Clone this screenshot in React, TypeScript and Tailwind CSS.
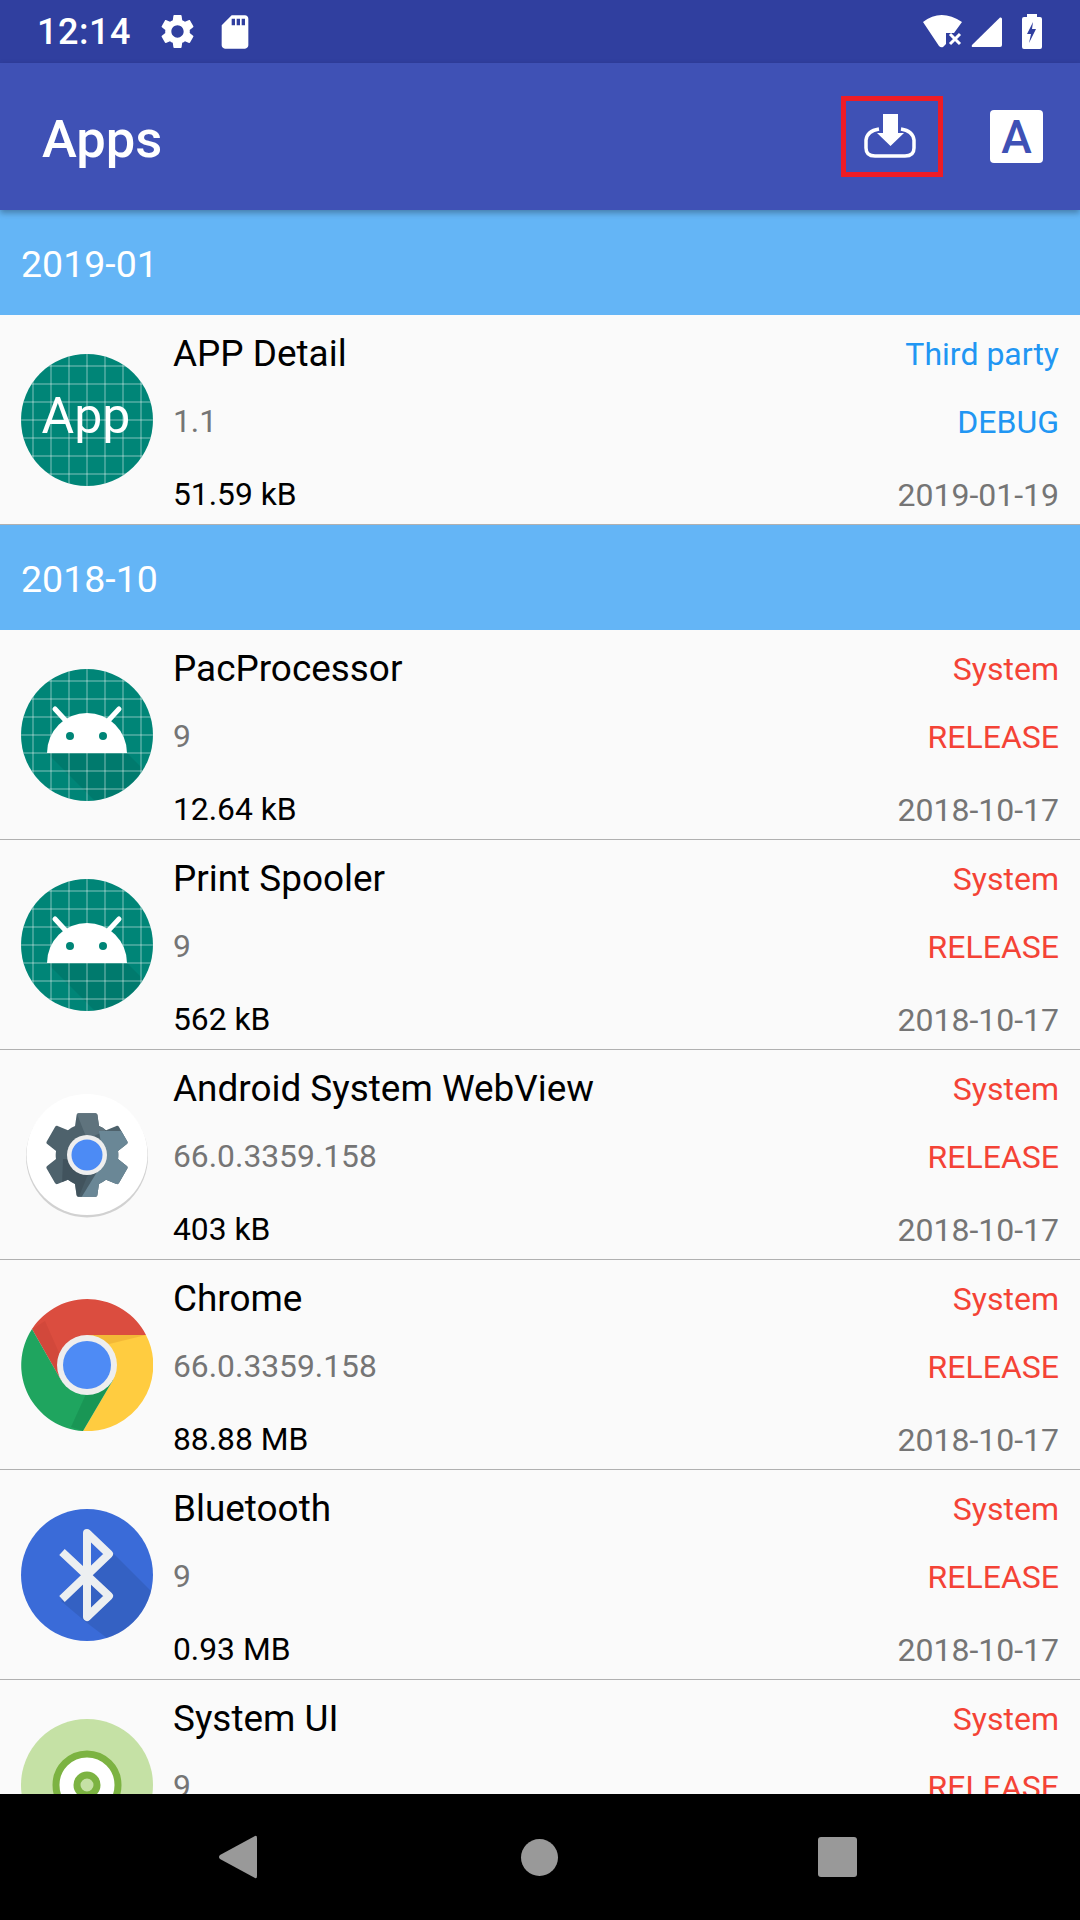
import type { ReactNode } from "react";

const GEAR =
  "M19.14 12.94c.04-.3.06-.61.06-.94 0-.32-.02-.64-.07-.94l2.03-1.58c.18-.14.23-.41.12-.61l-1.92-3.32c-.12-.22-.37-.29-.59-.22l-2.39.96c-.5-.38-1.03-.7-1.62-.94l-.36-2.54c-.04-.24-.24-.41-.48-.41h-3.84c-.24 0-.43.17-.47.41l-.36 2.54c-.59.24-1.13.57-1.62.94l-2.39-.96c-.22-.08-.47 0-.59.22L2.74 8.87c-.12.21-.08.47.12.61l2.03 1.58c-.05.3-.09.63-.09.94s.02.64.07.94l-2.03 1.58c-.18.14-.23.41-.12.61l1.92 3.32c.12.22.37.29.59.22l2.39-.96c.5.38 1.03.7 1.62.94l.36 2.54c.05.24.24.41.48.41h3.84c.24 0 .44-.17.47-.41l.36-2.54c.59-.24 1.13-.56 1.62-.94l2.39.96c.22.08.47 0 .59-.22l1.92-3.32c.12-.22.07-.47-.12-.61l-2.01-1.58zM12 15.6c-1.98 0-3.6-1.62-3.6-3.6s1.62-3.6 3.6-3.6 3.6 1.62 3.6 3.6-1.62 3.6-3.6 3.6z";

function GridLines() {
  return (
    <>
      {[12, 30, 48, 66, 84, 102, 120].map((p) => (
        <g key={p} stroke="#fff" strokeOpacity="0.5" strokeWidth="1">
          <line x1={p} y1="0" x2={p} y2="132" />
          <line x1="0" y1={p} x2="132" y2={p} />
        </g>
      ))}
    </>
  );
}

function AppIcon() {
  return (
    <svg width="132" height="132" viewBox="0 0 132 132">
      <defs>
        <clipPath id="app-clip">
          <circle cx="66" cy="66" r="66" />
        </clipPath>
      </defs>
      <g clipPath="url(#app-clip)">
        <rect width="132" height="132" fill="#008577" />
        <GridLines />
      </g>
      <text x="65" y="79" textAnchor="middle" fill="#fff" fontSize="50" fontFamily="Roboto, sans-serif">
        App
      </text>
    </svg>
  );
}

function AndroidIcon({ id }: { id: string }) {
  return (
    <svg width="132" height="132" viewBox="0 0 132 132">
      <defs>
        <clipPath id={id}>
          <circle cx="66" cy="66" r="66" />
        </clipPath>
      </defs>
      <g clipPath={`url(#${id})`}>
        <rect width="132" height="132" fill="#008577" />
        <polygon points="26,84 106,84 132,110 132,132 74,132" fill="#000" opacity="0.08" />
        <GridLines />
      </g>
      <path d="M26 84a40 40 0 0 1 80 0z" fill="#fff" />
      <path d="M34 40l12 13M98 40L86 53" stroke="#fff" strokeWidth="5" strokeLinecap="round" />
      <circle cx="49" cy="67" r="4" fill="#008577" />
      <circle cx="82" cy="67" r="4" fill="#008577" />
    </svg>
  );
}

function WebViewIcon() {
  return (
    <svg width="132" height="132" viewBox="0 0 132 132">
      <defs>
        <clipPath id="gear-clip">
          <path d={GEAR} transform="translate(13.8 13.8) scale(4.35)" />
        </clipPath>
      </defs>
      <circle cx="66" cy="67.500" r="61" fill="#000" opacity="0.16" />
      <circle cx="66" cy="65.500" r="60.500" fill="#fff" />
      <g clipPath="url(#gear-clip)">
        <rect width="132" height="132" fill="#4E626C" />
        <polygon points="50,10 82,10 84,42 66,50" fill="#5F737D" />
        <polygon points="52,122 66,88 82,66 78,42 122,42 122,122" fill="#6A8796" />
        <polygon points="42,70 84,70 52,122 40,122" fill="#3E4F58" opacity="0.75" />
      </g>
      <circle cx="66" cy="66" r="20" fill="#EEEEEE" />
      <circle cx="66" cy="66" r="15.500" fill="#4C8BF5" />
    </svg>
  );
}

function ChromeIcon() {
  return (
    <svg width="132" height="132" viewBox="0 0 132 132">
      <path d="M11 30A66 66 0 0 1 125 36H66L40 81z" fill="#DB4D3F" />
      <path d="M125 36A66 66 0 0 1 62 132L92 81 66 36z" fill="#FFCC40" />
      <path d="M62 132A66 66 0 0 1 11 30L40 81 92 81z" fill="#1FA55F" />
      <polygon points="11,30 24,22 46,72 38,78" fill="#B93A2E" opacity="0.25" />
      <polygon points="66,36 125,36 84,46 80,60" fill="#E29A2B" opacity="0.4" />
      <polygon points="62,132 92,81 70,84 50,128" fill="#0F7A45" opacity="0.35" />
      <circle cx="66" cy="66" r="30" fill="#EEEEEE" />
      <circle cx="66" cy="66" r="24" fill="#4E8BF5" />
    </svg>
  );
}

function BluetoothIcon() {
  return (
    <svg width="132" height="132" viewBox="0 0 132 132">
      <defs>
        <clipPath id="bt-clip">
          <circle cx="66" cy="66" r="66" />
        </clipPath>
      </defs>
      <circle cx="66" cy="66" r="66" fill="#3A6BD8" />
      <g clipPath="url(#bt-clip)">
        <polygon points="90,42 140,92 132,132 90,132 66,114 40,92 66,70" fill="#2A4F9E" opacity="0.35" />
      </g>
      <path d="M41 43L88 87 66 108V24L88 45 41 90" fill="none" stroke="#ECEFF1" strokeWidth="8" strokeLinejoin="round" />
    </svg>
  );
}

function SystemUiIcon() {
  return (
    <svg width="132" height="132" viewBox="0 0 132 132">
      <circle cx="66" cy="66" r="66" fill="#C5E1A5" />
      <circle cx="66" cy="66" r="31" fill="#fff" stroke="#7CB342" strokeWidth="7" />
      <circle cx="66" cy="66" r="10" fill="#C5E1A5" stroke="#7CB342" strokeWidth="7" />
    </svg>
  );
}

function StatusBar() {
  return (
    <div className="h-[63px] shrink-0 bg-[#303F9F] flex items-center text-white">
      <span className="ml-[37px] w-[125px] mt-[1px] text-[36px] leading-none font-['Roboto',sans-serif] font-medium tracking-[0.5px]">12:14</span>
      <svg width="41" height="41" viewBox="0 0 24 24" fill="#fff" className="-ml-[5px]">
        <path d={GEAR} />
      </svg>
      <svg width="40" height="40" viewBox="0 0 24 24" fill="#fff" className="ml-[17px]">
        <path d="M18 2h-8L4.020 8 4 20c0 1.100.9 2 2 2h12c1.100 0 2-.9 2-2V4c0-1.100-.9-2-2-2zm-6 6h-2V4h2v4zm3 0h-2V4h2v4zm3 0h-2V4h2v4z" />
      </svg>
      <svg width="40" height="34" viewBox="0 0 40 34" fill="#fff" className="ml-auto">
        <path d="M0 7Q18-7 39 7L31 18H23V29L20 32Q18 33 16 31z" />
        <path d="M27 19l10 10M37 19l-10 10" stroke="#fff" strokeWidth="3" fill="none" />
      </svg>
      <svg width="32" height="32" viewBox="0 0 32 32" fill="#fff" className="ml-[8px]">
        <path d="M1 29L29 1.500Q31 1 31 3V29Q31 31 29 31H2Q0 31 1 29z" />
      </svg>
      <svg width="20" height="35" viewBox="0 0 20 35" className="ml-[19px] mr-[38px]">
        <path d="M5 0H15V3H18Q20 3 20 5V33Q20 35 18 35H2Q0 35 0 33V5Q0 3 2 3H5z" fill="#fff" />
        <path d="M11 8L5 20H9L7 29 14 15H10z" fill="#303F9F" />
      </svg>
    </div>
  );
}

function Toolbar() {
  return (
    <div className="h-[147px] shrink-0 bg-[#3F51B5] flex items-center relative z-10 shadow-[0_3px_6px_rgba(0,0,0,0.3)] text-white">
      <span className="ml-[42px] mt-[6px] text-[52.500px] font-['Roboto',sans-serif] font-medium leading-none">Apps</span>
      <div className="ml-auto w-[102px] h-[81px] border-[5px] border-[#EE1C25] flex items-center justify-center">
        <svg width="54" height="50" viewBox="0 0 54 50" fill="none" className="-ml-[5px]">
          <path d="M16 17Q4 19 3 28V36Q3 44 12 44H42Q51 44 51 36V28Q50 19 38 17" stroke="#fff" strokeWidth="3.500" />
          <path d="M20 2H35V21H41L27.500 34 14 21H20z" fill="#fff" />
        </svg>
      </div>
      <div className="ml-[47px] mr-[37px] w-[53px] h-[53px] bg-white rounded-[4px] flex items-center justify-center text-[#3F51B5] text-[46px] font-['Roboto',sans-serif] font-medium leading-none">
        A
      </div>
    </div>
  );
}

function SectionHeader({ label }: { label: string }) {
  return (
    <div className="h-[105px] flex items-center pl-[21px] pt-[3px] bg-[#64B5F6] text-white text-[37.500px] font-['Roboto',sans-serif]">
      {label}
    </div>
  );
}

interface AppRowProps {
  icon: ReactNode;
  name: string;
  version: string;
  size?: string;
  date?: string;
  third?: boolean;
}

function AppRow({ icon, name, version, size, date, third }: AppRowProps) {
  const tagColor = third ? "text-[#2196F3]" : "text-[#F44336]";
  return (
    <div className="h-[210px] border-b border-[#b0b0b0] flex pl-[21px] pr-[21px] font-['Roboto',sans-serif]">
      <div className="w-[132px] h-[132px] shrink-0 mt-[39px]">{icon}</div>
      <div className="ml-[20px] flex-1 grid grid-cols-[1fr_auto] grid-rows-[60px_76px_70px] items-center pt-[9px] h-max">
        <div className="text-[36.900px] leading-none text-black">{name}</div>
        <div className={`text-[32px] leading-none text-right ${tagColor}`}>{third ? "Third party" : "System"}</div>
        <div className="text-[31.800px] leading-none text-[#757575]">{version}</div>
        <div className={`text-[32px] leading-none text-right ${tagColor}`}>{third ? "DEBUG" : "RELEASE"}</div>
        <div className="text-[31.800px] leading-none text-black">{size}</div>
        <div className="text-[32px] leading-none text-right text-[#757575]">{date}</div>
      </div>
    </div>
  );
}

function NavBar() {
  return (
    <div className="h-[126px] shrink-0 bg-black relative z-10 flex items-center">
      <svg width="38" height="44" viewBox="0 0 38 44" className="ml-[219px]">
        <path d="M36 1Q38 0 38 3V41Q38 44 36 43L1 24Q-1 22 1 20z" fill="#999" />
      </svg>
      <div className="ml-[264px] w-[37px] h-[37px] rounded-full bg-[#999]" />
      <div className="ml-[260px] w-[39px] h-[40px] rounded-[3px] bg-[#999]" />
    </div>
  );
}

export default function App() {
  return (
    <div className="w-[1080px] h-[1920px] flex flex-col overflow-hidden bg-[#FAFAFA]">
      <StatusBar />
      <Toolbar />
      <div className="flex-1 overflow-hidden">
        <SectionHeader label="2019-01" />
        <AppRow icon={<AppIcon />} name="APP Detail" version="1.1" size="51.59 kB" date="2019-01-19" third />
        <SectionHeader label="2018-10" />
        <AppRow icon={<AndroidIcon id="a1" />} name="PacProcessor" version="9" size="12.64 kB" date="2018-10-17" />
        <AppRow icon={<AndroidIcon id="a2" />} name="Print Spooler" version="9" size="562 kB" date="2018-10-17" />
        <AppRow icon={<WebViewIcon />} name="Android System WebView" version="66.0.3359.158" size="403 kB" date="2018-10-17" />
        <AppRow icon={<ChromeIcon />} name="Chrome" version="66.0.3359.158" size="88.88 MB" date="2018-10-17" />
        <AppRow icon={<BluetoothIcon />} name="Bluetooth" version="9" size="0.93 MB" date="2018-10-17" />
        <AppRow icon={<SystemUiIcon />} name="System UI" version="9" />
      </div>
      <NavBar />
    </div>
  );
}
